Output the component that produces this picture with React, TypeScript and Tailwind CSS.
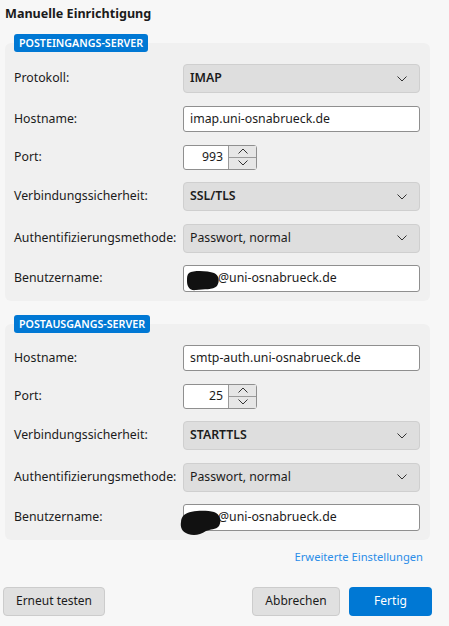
import React from "react";

const font = { fontFamily: '"Noto Sans", "Open Sans", sans-serif' };

function Chevron({ up = false }: { up?: boolean }) {
  return (
    <svg width="10" height="6" viewBox="0 0 10 6" className={up ? "rotate-180" : ""}>
      <path d="M0.5 0.5 L5 5 L9.5 0.5" fill="none" stroke="#333" strokeWidth="1" />
    </svg>
  );
}

function Select({ value, bold }: { value: string; bold?: boolean }) {
  return (
    <div className="flex h-[29px] w-[237px] items-center justify-between rounded-[4px] border border-[#cfcfcf] bg-[#dedede] pl-[6px] pr-[12px]">
      <span className={`text-[12.3px] text-[#1b1b1b] ${bold ? "font-semibold" : ""}`}>{value}</span>
      <Chevron />
    </div>
  );
}

function TextInput({ value }: { value: string }) {
  return (
    <div className="flex h-[26.5px] w-[237px] items-center rounded-[3px] border border-[#8f8f8f] bg-white px-[6px]">
      <span className="text-[12.3px] text-[#1b1b1b]">{value}</span>
    </div>
  );
}

function UserInput({ blob }: { blob: "a" | "b" }) {
  return (
    <div className="relative flex h-[26.5px] w-[237px] items-center rounded-[3px] border border-[#8f8f8f] bg-white pl-[34px]">
      <span className="text-[12.3px] text-[#1b1b1b]">@uni-osnabrueck.de</span>
      {blob === "a" ? (
        <svg className="absolute left-[2px] top-[3px]" width="34" height="22" viewBox="0 0 34 22">
          <path d="M3 4 C8 1 22 2 28 4 C33 6 34 12 31 17 C27 21 18 20 10 21 C4 22 1 18 1 12 C1 8 1 6 3 4 Z" fill="#111" />
        </svg>
      ) : (
        <svg className="absolute left-[-4px] top-[2px]" width="42" height="30" viewBox="0 0 42 30">
          <path d="M4 8 C10 3 26 3 34 5 C40 7 42 14 39 19 C36 23 30 22 26 24 C20 28 14 29 8 27 C2 25 0 20 1 15 C1 12 2 10 4 8 Z" fill="#111" />
        </svg>
      )}
    </div>
  );
}

function Port({ value }: { value: string }) {
  return (
    <div className="flex h-[25px] w-[74px] rounded-[3px] border border-[#8f8f8f] bg-white">
      <div className="flex flex-1 items-center justify-end pr-[5px] text-[12.3px] text-[#1b1b1b]">{value}</div>
      <div className="flex w-[28px] flex-col border-l border-[#9a9a9a] bg-[#e6e6e6]">
        <div className="flex flex-1 items-center justify-center border-b border-[#9a9a9a]">
          <Chevron up />
        </div>
        <div className="flex flex-1 items-center justify-center">
          <Chevron />
        </div>
      </div>
    </div>
  );
}

function Row({ label, children }: { label: string; children: React.ReactNode }) {
  return (
    <div className="flex items-center">
      <div className="w-[169px] text-[12.3px] text-[#1b1b1b]">{label}</div>
      {children}
    </div>
  );
}

function Section({ title, children }: { title: string; children: React.ReactNode }) {
  return (
    <div className="flex flex-col">
      <div className="relative z-10 ml-[9px] self-start rounded-[3px] bg-[#0078d4] px-[5px] text-[10.7px] font-semibold leading-[18px] text-white">
        {title}
      </div>
      <div className="-mt-[9px] flex w-[425px] flex-col gap-[12.5px] rounded-[6px] bg-[#f0f0f0] pb-[9px] pl-[9px] pr-[10px] pt-[21px]">
        {children}
      </div>
    </div>
  );
}

export default function App() {
  return (
    <main className="flex h-[626px] w-[449px] flex-col bg-[#f7f7f7] px-[5px]" style={font}>
      <h1 className="pt-[4px] text-[12.6px] font-bold leading-[20px] text-[#1b1b1b]">Manuelle Einrichtigung</h1>

      <div className="mt-[10px]">
        <Section title="POSTEINGANGS-SERVER">
          <Row label="Protokoll:">
            <Select value="IMAP" bold />
          </Row>
          <Row label="Hostname:">
            <TextInput value="imap.uni-osnabrueck.de" />
          </Row>
          <Row label="Port:">
            <Port value="993" />
          </Row>
          <Row label="Verbindungssicherheit:">
            <Select value="SSL/TLS" bold />
          </Row>
          <Row label="Authentifizierungsmethode:">
            <Select value="Passwort, normal" />
          </Row>
          <Row label="Benutzername:">
            <UserInput blob="a" />
          </Row>
        </Section>
      </div>

      <div className="mt-[14px]">
        <Section title="POSTAUSGANGS-SERVER">
          <Row label="Hostname:">
            <TextInput value="smtp-auth.uni-osnabrueck.de" />
          </Row>
          <Row label="Port:">
            <Port value="25" />
          </Row>
          <Row label="Verbindungssicherheit:">
            <Select value="STARTTLS" bold />
          </Row>
          <Row label="Authentifizierungsmethode:">
            <Select value="Passwort, normal" />
          </Row>
          <Row label="Benutzername:">
            <UserInput blob="b" />
          </Row>
        </Section>
      </div>

      <div className="mt-[8px] flex w-[425px] justify-end pr-[7px]">
        <a className="text-[11.2px] leading-[18px] text-[#2b8de8]">Erweiterte Einstellungen</a>
      </div>

      <div className="mt-[21px] flex w-[427px] items-center justify-between">
        <button className="-ml-[2px] h-[29px] w-[102px] rounded-[4px] border border-[#cccccc] bg-[#e0e0e0] text-[12px] text-[#1b1b1b]">
          Erneut testen
        </button>
        <div className="flex gap-[9px]">
          <button className="h-[29px] w-[88px] rounded-[4px] border border-[#cccccc] bg-[#e0e0e0] text-[12px] text-[#1b1b1b]">
            Abbrechen
          </button>
          <button className="h-[29px] w-[83px] rounded-[4px] bg-[#0078d4] text-[12px] text-white">Fertig</button>
        </div>
      </div>
    </main>
  );
}
